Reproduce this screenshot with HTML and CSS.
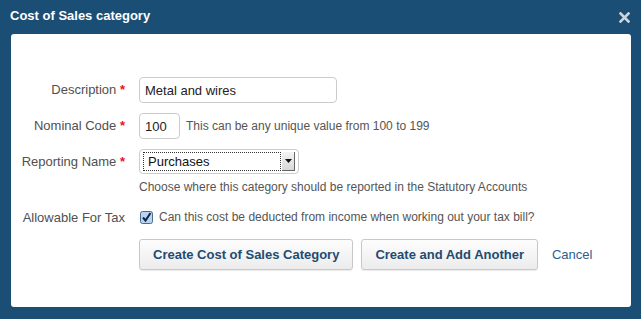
FILE: index.html
```html
<!DOCTYPE html>
<html lang="en">
<head>
  <meta charset="UTF-8" />
  <title>Cost of Sales category</title>
  <meta name="viewport" content="width=device-width, initial-scale=1" />
  <link rel="stylesheet" href="styles.css">
</head>
<body>

  <header class="dialog-head">
    <h2>Cost of Sales category</h2>
    <button class="close" aria-label="Close">
      <svg width="11" height="11" viewBox="0 0 11 11"><path d="M1.5 1.5 L9.5 9.5 M9.5 1.5 L1.5 9.5" stroke="#c9d6e1" stroke-width="2.6" stroke-linecap="square"/></svg>
    </button>
  </header>

  <form class="panel" onsubmit="event.preventDefault();">
    <div class="row">
      <label for="desc">Description <span class="req">*</span></label>
      <div class="field">
        <input type="text" id="desc" class="text wide" value="Metal and wires">
      </div>
    </div>

    <div class="row">
      <label for="code">Nominal Code <span class="req">*</span></label>
      <div class="field inline">
        <input type="text" id="code" class="text short" value="100">
        <span class="hint">This can be any unique value from 100 to 199</span>
      </div>
    </div>

    <div class="row">
      <label>Reporting Name <span class="req">*</span></label>
      <div class="field">
        <div class="select">
          <span class="select-value">Purchases</span>
          <span class="select-arrow">
            <svg width="7" height="4" viewBox="0 0 7 4"><path d="M0 0 H7 L3.5 4 Z" fill="#111"/></svg>
          </span>
        </div>
        <p class="hint help">Choose where this category should be reported in the Statutory Accounts</p>
      </div>
    </div>

    <div class="row check-row">
      <label>Allowable For Tax</label>
      <div class="field inline">
        <svg class="checkbox" width="13" height="13" viewBox="0 0 13 13">
          <rect x="0.5" y="0.5" width="12" height="12" rx="2" fill="#b9d3f0" stroke="#4a6a8e"/>
          <path d="M3 6.5 L5.5 9.5 L10.5 2" fill="none" stroke="#0d2746" stroke-width="2"/>
        </svg>
        <span class="hint">Can this cost be deducted from income when working out your tax bill?</span>
      </div>
    </div>

    <div class="row actions">
      <span></span>
      <div class="field inline">
        <button type="submit" class="btn">Create Cost of Sales Category</button>
        <button type="button" class="btn">Create and Add Another</button>
        <a href="#" class="cancel">Cancel</a>
      </div>
    </div>
  </form>

</body>
</html>
```

FILE: styles.css
```css
body {
  margin: 0;
  background: #1a4e75;
  font-family: "Liberation Sans", Arial, sans-serif;
  height: 319px;
  overflow: hidden;
}

.dialog-head {
  display: flex;
  justify-content: space-between;
  align-items: center;
  height: 34px;
  padding: 0 11px 0 10px;
  box-sizing: border-box;
}

.dialog-head h2 {
  margin: 0;
  color: #fff;
  font-size: 13px;
  font-weight: bold;
  line-height: 16px;
  margin-top: -3px;
}

.close {
  background: none;
  border: none;
  padding: 0;
  margin-top: 1px;
  display: flex;
  cursor: pointer;
}

.panel {
  background: #fff;
  margin: 0 10px 0 11px;
  height: 273px;
  border-radius: 3px;
  padding-top: 43px;
  box-sizing: border-box;
}

.row {
  display: grid;
  grid-template-columns: 114px 1fr;
  column-gap: 14px;
  align-items: start;
  margin-bottom: 10px;
}

.row label {
  text-align: right;
  font-size: 13px;
  line-height: 26px;
  color: #505050;
}

.req {
  color: #e8141a;
  font-weight: bold;
}

.field.inline {
  display: flex;
  align-items: center;
}

.text {
  height: 26px;
  box-sizing: border-box;
  border: 1px solid #ccc;
  border-radius: 4px;
  padding: 0 5px;
  font-family: inherit;
  font-size: 13px;
  color: #222;
  outline: none;
}

.wide {
  width: 198px;
}

.short {
  width: 41px;
}

.hint {
  font-size: 12px;
  color: #555;
  margin-left: 6px;
}

.help {
  margin: 6px 0 0;
  line-height: 14px;
}

.select {
  width: 160px;
  height: 25px;
  box-sizing: border-box;
  border: 1px solid #ccc;
  border-radius: 4px;
  display: flex;
  align-items: center;
  padding: 2px 3px;
  gap: 1px;
}

.select-value {
  flex: 1;
  height: 100%;
  border: 1px dotted #333;
  box-sizing: border-box;
  font-size: 13px;
  line-height: 17px;
  padding-left: 4px;
  color: #111;
}

.select-arrow {
  width: 13px;
  height: 19px;
  background: linear-gradient(#f4f4f4, #d8d8d8);
  border-right: 1px solid #666;
  border-bottom: 1px solid #666;
  box-sizing: border-box;
  display: flex;
  align-items: center;
  justify-content: center;
}

.check-row {
  margin-top: 16px;
  margin-bottom: 13px;
}

.check-row label {
  line-height: 16px;
}

.checkbox {
  margin-left: 1px;
}

.check-row .hint {
  margin-left: 6px;
}

.btn {
  height: 31px;
  padding: 0 13px;
  margin-right: 8px;
  background: linear-gradient(#fdfdfd, #ececec);
  border: 1px solid #c8c8c8;
  border-radius: 3px;
  box-shadow: 0 1px 1px rgba(0,0,0,0.08);
  color: #1e4b72;
  font-family: inherit;
  font-size: 13px;
  font-weight: bold;
  cursor: pointer;
}

.cancel {
  margin-left: 6px;
  font-size: 13px;
  color: #2a5f8e;
  text-decoration: none;
}
```
